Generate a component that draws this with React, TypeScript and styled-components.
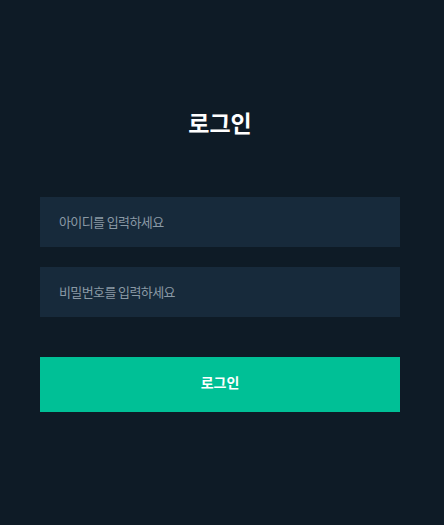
import styled, { createGlobalStyle } from 'styled-components'

const GlobalStyle = createGlobalStyle`
  html, body {
    margin: 0;
    padding: 0;
    background-color: #0e1b26;
  }
  body {
    font-family: "Noto Sans CJK KR", "Noto Sans", sans-serif;
  }
`

const App = () => {
  return (
    <>
      <GlobalStyle />
      <Page>
        <Title>로그인</Title>
        <Form onSubmit={(e) => e.preventDefault()}>
          <Input type="text" placeholder="아이디를 입력하세요" />
          <Input type="password" placeholder="비밀번호를 입력하세요" />
          <SubmitButton type="submit">로그인</SubmitButton>
        </Form>
      </Page>
    </>
  )
}

const Page = styled.div`
  box-sizing: border-box;
  min-height: 525px;
  padding: 98px 44px 0 40px;
  background-color: #0e1b26;
`

const Title = styled.h1`
  margin: 0;
  height: 48px;
  line-height: 48px;
  text-align: center;
  font-size: 23px;
  font-weight: 700;
  color: #ffffff;
`

const Form = styled.form`
  display: flex;
  flex-direction: column;
  gap: 20px;
  margin-top: 51px;
`

const Input = styled.input`
  box-sizing: border-box;
  width: 100%;
  height: 50px;
  padding: 0 19px 1px;
  border: none;
  outline: none;
  background-color: #172a3b;
  color: #ffffff;
  font-family: inherit;
  font-size: 13px;
  letter-spacing: -0.6px;

  &::placeholder {
    color: #8a99a5;
  }
`

const SubmitButton = styled.button`
  height: 55px;
  margin-top: 20px;
  padding: 0 0 5px;
  border: none;
  background-color: #00c096;
  color: #ffffff;
  font-family: inherit;
  font-size: 14px;
  font-weight: 700;
  cursor: pointer;
`

export default App
